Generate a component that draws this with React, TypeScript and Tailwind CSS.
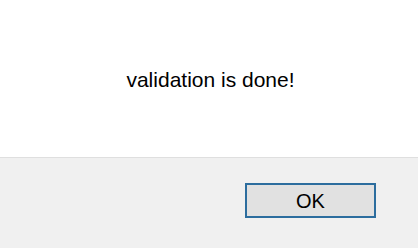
export default function App() {
  return (
    <div className="w-[418px] h-[248px] flex flex-col bg-[#f0f0f0] font-['Liberation_Sans',Arial,sans-serif] text-black">
      <div className="h-[158px] shrink-0 bg-white border-b border-[#dfdfdf] flex justify-center pt-[69px] pl-[3px]">
        <p className="text-[21px] leading-[21px]">validation is done!</p>
      </div>
      <div className="flex-1 flex justify-end items-start pt-[25px] pr-[42px]">
        <button className="w-[131px] h-[35px] bg-[#e1e1e1] border-2 border-[#2c6d9e] text-[20px] leading-none flex items-center justify-center">
          OK
        </button>
      </div>
    </div>
  )
}
